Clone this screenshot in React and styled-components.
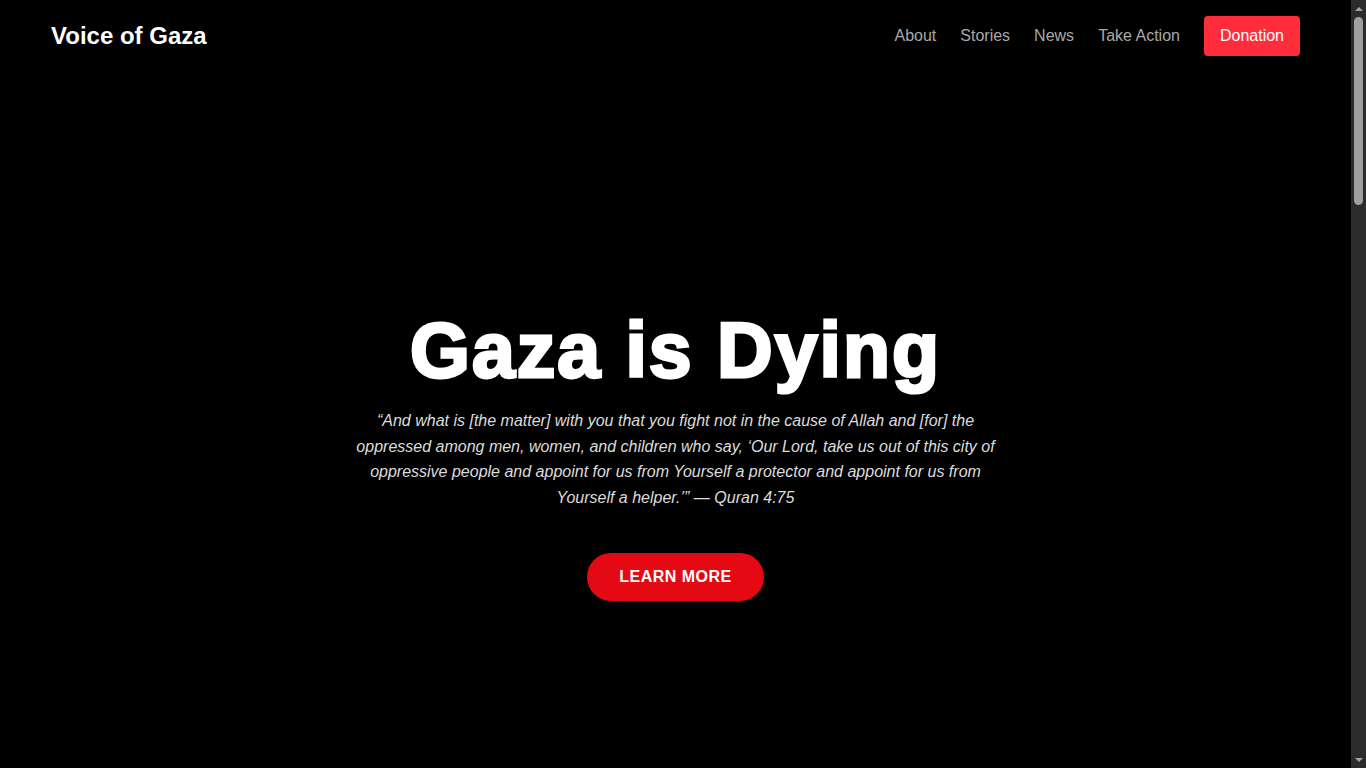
import React from 'react'

import styled, { createGlobalStyle } from 'styled-components'

const links = ['About', 'Stories', 'News', 'Take Action']

const sections = [
    { id: 'about', title: 'About', text: 'Voice of Gaza shares the stories of the people living through the siege.' },
    { id: 'stories', title: 'Stories', text: 'First-hand accounts from families, doctors and children in Gaza.' },
    { id: 'news', title: 'News', text: 'The latest reports and updates from the ground.' },
    { id: 'action', title: 'Take Action', text: 'Raise your voice, share the truth and support humanitarian relief.' },
]

function App() {
    return (
        <>
            <GlobalStyle />
            <Header>
                <Logo>Voice of Gaza</Logo>
                <Nav>
                    {links.map((link) => (
                        <NavLink key={link} href="#">
                            {link}
                        </NavLink>
                    ))}
                    <DonateButton href="#">Donation</DonateButton>
                </Nav>
            </Header>

            <Hero>
                <HeroContent>
                    <Title>Gaza is Dying</Title>
                    <Quote>
                        “And what is [the matter] with you that you fight not in the cause of Allah and [for] the
                        oppressed among men, women, and children who say, ‘Our Lord, take us out of this city of
                        oppressive people and appoint for us from Yourself a protector and appoint for us from
                        Yourself a helper.’” — Quran 4:75
                    </Quote>
                    <LearnButton href="#">Learn More</LearnButton>
                </HeroContent>
            </Hero>

            {sections.map((s) => (
                <Section key={s.id} id={s.id}>
                    <SectionTitle>{s.title}</SectionTitle>
                    <SectionText>{s.text}</SectionText>
                </Section>
            ))}

            {/* the browser's scrollbar, drawn since the headless page hides it */}
            <ScrollTrack>
                <ScrollArrow $dir="up" />
                <ScrollThumb />
                <ScrollArrow $dir="down" />
            </ScrollTrack>
        </>
    )
}

const GlobalStyle = createGlobalStyle`
    html {
        color-scheme: dark;
        background: #000;
    }
    body {
        margin: 0;
        padding-right: 15px;
        background: #000;
        color: #fff;
        font-family: "Liberation Sans", Arial, sans-serif;
    }
    * {
        box-sizing: border-box;
    }
`

const Header = styled.header`
    display: flex;
    align-items: center;
    justify-content: space-between;
    height: 72px;
    padding: 0 51px;
    background: #000;
`

const Logo = styled.div`
    font-size: 24px;
    font-weight: 700;
    color: #fff;
`

const Nav = styled.nav`
    display: flex;
    align-items: center;
    gap: 24px;
`

const NavLink = styled.a`
    font-size: 16px;
    color: #a9a9a9;
    text-decoration: none;
`

const DonateButton = styled.a`
    display: inline-block;
    padding: 11px 16px;
    line-height: 18px;
    font-size: 16px;
    color: #fff;
    background: #ff2d3b;
    border-radius: 4px;
    text-decoration: none;
`

const Hero = styled.section`
    display: flex;
    align-items: center;
    justify-content: center;
    min-height: 100vh;
    padding-bottom: 7px;
`

const HeroContent = styled.div`
    display: flex;
    flex-direction: column;
    align-items: center;
    max-width: 650px;
    text-align: center;
`

const Title = styled.h1`
    margin: 0 0 10px;
    font-size: 77px;
    line-height: 1.22;
    font-weight: 900;
    white-space: nowrap;
    -webkit-text-stroke: 3px #fff;
    letter-spacing: 2px;
`

const Quote = styled.p`
    margin: 0;
    font-size: 16px;
    line-height: 1.6;
    font-style: italic;
    color: #dcdcdc;
`

const LearnButton = styled.a`
    display: inline-block;
    margin-top: 42px;
    padding: 15px 32px;
    line-height: 18px;
    font-size: 16px;
    font-weight: 700;
    letter-spacing: 0.5px;
    text-transform: uppercase;
    color: #fff;
    background: #e50914;
    border-radius: 30px;
    text-decoration: none;
`

const Section = styled.section`
    display: flex;
    flex-direction: column;
    align-items: center;
    justify-content: center;
    min-height: 540px;
    padding: 60px 51px;
    text-align: center;
`

const SectionTitle = styled.h2`
    margin: 0 0 16px;
    font-size: 36px;
    font-weight: 700;
`

const SectionText = styled.p`
    margin: 0;
    max-width: 640px;
    font-size: 16px;
    line-height: 1.6;
    color: #bbb;
`

const ScrollTrack = styled.div`
    position: fixed;
    top: 0;
    right: 0;
    bottom: 0;
    width: 15px;
    display: flex;
    flex-direction: column;
    align-items: center;
    background: #2b2b2b;
`

const ScrollArrow = styled.div`
    flex: 0 0 17px;
    width: 15px;
    display: flex;
    align-items: center;
    justify-content: center;
    margin-top: ${(p) => (p.$dir === 'down' ? 'auto' : '0')};

    &::before {
        content: '';
        border-left: 4px solid transparent;
        border-right: 4px solid transparent;
        ${(p) => (p.$dir === 'up' ? 'border-bottom' : 'border-top')}: 4px solid #a3a3a3;
    }
`

const ScrollThumb = styled.div`
    width: 9px;
    height: 188px;
    border-radius: 5px;
    background: #9f9f9f;
`

export default App
